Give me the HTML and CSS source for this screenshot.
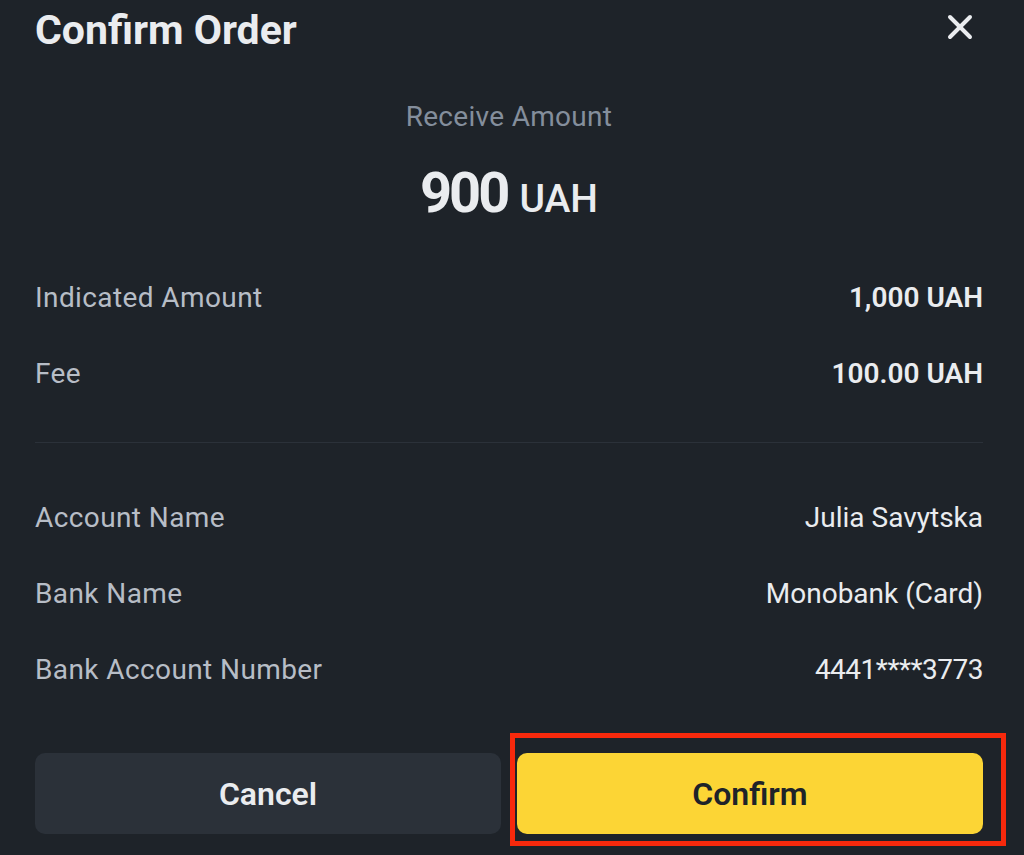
FILE: index.html
```html
<!DOCTYPE html>
<html>
<head>
    <title>Confirm Order</title>
    <link rel="stylesheet" href="styles.css">
</head>
<body>
    <div class="modal">
        <div class="header">
            <h1 class="title">Confirm Order</h1>
            <svg class="close" width="28" height="28" viewBox="0 0 28 28">
                <line x1="4" y1="4" x2="24" y2="24" />
                <line x1="24" y1="4" x2="4" y2="24" />
            </svg>
        </div>

        <div class="summary">
            <div class="summary-label">Receive Amount</div>
            <div class="summary-amount">
                <span class="big">900</span>
                <span class="unit">UAH</span>
            </div>
        </div>

        <div class="rows">
            <div class="row">
                <span class="label">Indicated Amount</span>
                <span class="value strong">1,000 UAH</span>
            </div>
            <div class="row">
                <span class="label">Fee</span>
                <span class="value strong">100.00 UAH</span>
            </div>
        </div>

        <div class="divider"></div>

        <div class="rows rows-bank">
            <div class="row">
                <span class="label">Account Name</span>
                <span class="value">Julia Savytska</span>
            </div>
            <div class="row">
                <span class="label">Bank Name</span>
                <span class="value">Monobank (Card)</span>
            </div>
            <div class="row">
                <span class="label">Bank Account Number</span>
                <span class="value number">4441****3773</span>
            </div>
        </div>

        <div class="actions">
            <button class="btn btn-cancel">Cancel</button>
            <div class="confirm-wrap">
                <button class="btn btn-confirm">Confirm</button>
                <div class="highlight"></div>
            </div>
        </div>
    </div>
</body>
</html>
```

FILE: styles.css
```css
html, body {
    height: 100%;
}
body {
    margin: 0;
    background-color: #1e2329;
    font-family: Roboto, "Liberation Sans", Arial, sans-serif;
    color: #eaecef;
}
.modal {
    padding: 0 41px 21px 35px;
}
.header {
    display: flex;
    justify-content: space-between;
    align-items: center;
    height: 60px;
}
.title {
    margin: 0;
    font-size: 41px;
    font-weight: 700;
    line-height: 60px;
    color: #eaecef;
}
.close {
    margin-right: 9px;
    margin-bottom: 6px;
}
.close line {
    stroke: #eaecef;
    stroke-width: 4;
    stroke-linecap: round;
}
.summary {
    text-align: center;
    margin-top: 39px;
}
.summary-label {
    font-size: 28px;
    letter-spacing: 0.3px;
    line-height: 36px;
    color: #848e9c;
}
.summary-amount {
    display: flex;
    justify-content: center;
    align-items: baseline;
    gap: 12px;
    height: 64px;
    margin-top: 26px;
    line-height: 64px;
}
.summary-amount .big {
    font-size: 56px;
    font-weight: 700;
    letter-spacing: -3px;
}
.summary-amount .unit {
    font-size: 39px;
    font-weight: 500;
}
.rows {
    margin-top: 34px;
}
.rows-bank {
    margin-top: 36px;
}
.row {
    display: flex;
    justify-content: space-between;
    align-items: center;
    height: 76px;
    font-size: 28px;
}
.label {
    color: #b7bdc6;
    letter-spacing: 0.4px;
}
.value {
    color: #eaecef;
}
.value.strong {
    font-weight: 600;
}
.value.number {
    letter-spacing: -0.5px;
}
.divider {
    margin-top: 31px;
    height: 1px;
    background-color: #2b3139;
}
.actions {
    display: grid;
    grid-template-columns: 1fr 1fr;
    gap: 16px;
    margin-top: 46px;
}
.btn {
    width: 100%;
    height: 81px;
    border: none;
    border-radius: 10px;
    font-family: Roboto, "Liberation Sans", Arial, sans-serif;
    font-size: 32px;
    font-weight: 600;
    cursor: pointer;
}
.btn-cancel {
    background-color: #2b3139;
    color: #eaecef;
}
.btn-confirm {
    background-color: #fcd535;
    color: #1e2329;
}
.confirm-wrap {
    position: relative;
}
.highlight {
    position: absolute;
    left: -7px;
    top: -20px;
    width: 496px;
    height: 113px;
    box-sizing: border-box;
    border: 5px solid #f7290c;
    pointer-events: none;
}
```
